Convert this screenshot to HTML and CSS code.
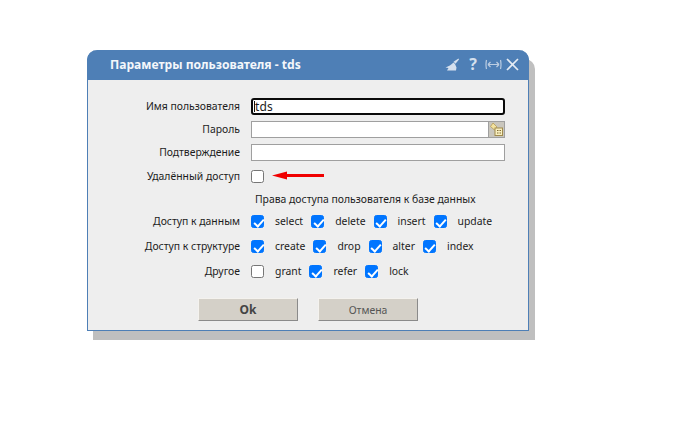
FILE: index.html
```html
<!DOCTYPE html>
<html lang="ru">
<head>
<meta charset="utf-8">
<title>Параметры пользователя</title>
<link rel="stylesheet" href="styles.css">
</head>
<body>
<div class="dialog">
  <header class="titlebar">
    <h1 class="title">Параметры пользователя - tds</h1>
    <div class="tools">
      <svg class="icon icon-broom" width="14" height="13" viewBox="0 0 14 13"><path d="M13.500 .5 8.500 3.800 10.500 5.800 14 1.500ZM8.500 4.500C6.500 6.500 3.500 8.500 .5 9.500L3.500 10 2 12.500H11L11.500 9.500 10 6Z" fill="#d5e0ee"/></svg>
      <span class="help">?</span>
      <svg class="icon icon-fit" width="17" height="11" viewBox="0 0 17 11"><path d="M1.500 1Q.500 5.500 1.500 10M15.500 1Q16.500 5.500 15.500 10M3 5.500H14M3 5.500 5.500 3M3 5.500 5.500 8M14 5.500 11.500 3M14 5.500 11.500 8" stroke="#bccde2" stroke-width="1.200" fill="none"/></svg>
      <svg class="icon" width="13" height="13" viewBox="0 0 13 13"><path d="M1 1 12 12M12 1 1 12" stroke="#e4ebf4" stroke-width="1.700" fill="none"/></svg>
    </div>
  </header>
  <form class="body">
    <div class="row row-field">
      <label class="label">Имя пользователя</label>
      <div class="input input-focus"><span class="caret"></span><span class="value">tds</span></div>
    </div>
    <div class="row row-field">
      <label class="label">Пароль</label>
      <div class="input input-pass">
        <span class="keybtn">
          <svg width="15" height="15" viewBox="0 0 15 15"><path d="M4 1 8 5 5.500 8 1.500 4.500Z" fill="#f3e3a0" stroke="#b59a55" stroke-width=".8"/><rect x="6" y="6" width="7.500" height="7.500" fill="#f8efc0" stroke="#a08a4c"/><path d="M8 8.500H9.500M10.500 8.500H12M8 11H9.500M10.500 11H12" stroke="#806a30"/></svg>
        </span>
      </div>
    </div>
    <div class="row row-field">
      <label class="label">Подтверждение</label>
      <div class="input"></div>
    </div>
    <div class="row row-remote">
      <label class="label">Удалённый доступ</label>
      <input class="check" type="checkbox">
      <svg class="arrow" width="52" height="9" viewBox="0 0 52 9"><path d="M0 4.500 15 .5V3H52V6H15V8.500Z" fill="#f00000"/></svg>
    </div>
    <div class="row row-heading">
      <span class="label"></span>
      <span class="heading">Права доступа пользователя к базе данных</span>
    </div>
    <div class="row row-perm">
      <label class="label">Доступ к данным</label>
      <div class="perms">
        <label class="perm"><input class="check" type="checkbox" checked><span class="perm-text">select</span></label>
        <label class="perm"><input class="check" type="checkbox" checked><span class="perm-text">delete</span></label>
        <label class="perm"><input class="check" type="checkbox" checked><span class="perm-text">insert</span></label>
        <label class="perm"><input class="check" type="checkbox" checked><span class="perm-text">update</span></label>
      </div>
    </div>
    <div class="row row-perm">
      <label class="label">Доступ к структуре</label>
      <div class="perms">
        <label class="perm"><input class="check" type="checkbox" checked><span class="perm-text">create</span></label>
        <label class="perm"><input class="check" type="checkbox" checked><span class="perm-text">drop</span></label>
        <label class="perm"><input class="check" type="checkbox" checked><span class="perm-text">alter</span></label>
        <label class="perm"><input class="check" type="checkbox" checked><span class="perm-text">index</span></label>
      </div>
    </div>
    <div class="row row-perm">
      <label class="label">Другое</label>
      <div class="perms">
        <label class="perm"><input class="check" type="checkbox"><span class="perm-text">grant</span></label>
        <label class="perm"><input class="check" type="checkbox" checked><span class="perm-text">refer</span></label>
        <label class="perm"><input class="check" type="checkbox" checked><span class="perm-text">lock</span></label>
      </div>
    </div>
    <div class="buttons">
      <button class="btn btn-ok" type="button">Ok</button>
      <button class="btn btn-cancel" type="button">Отмена</button>
    </div>
  </form>
</div>
</body>
</html>
```

FILE: styles.css
```css
* { box-sizing: border-box; }
html, body { margin: 0; height: 100%; background: #fff; }
body {
  padding: 50px 0 0 87px;
  font-family: "Noto Sans", "DejaVu Sans", sans-serif;
  font-size: 10.4px;
  color: #1c1c1c;
}
.dialog {
  width: 442px;
  height: 281px;
  background: #eeeeee;
  border: 1px solid #4e7fb6;
  border-top: 0;
  border-radius: 10px 10px 0 0;
  box-shadow: 6px 9px 0 #bfbfbf;
  display: flex;
  flex-direction: column;
}
.titlebar {
  height: 30px;
  margin: 0 -1px;
  flex: none;
  background: #4e7fb6;
  border-radius: 10px 10px 0 0;
  display: flex;
  align-items: center;
  padding: 0 10px 0 23px;
  color: #fff;
}
.title { margin: 0; font-size: 12.100px; font-weight: bold; flex: 1; color: #f4f7fb; padding-bottom: 1px; }
.tools { display: flex; align-items: center; margin-top: -2px; }
.icon { display: block; }
.icon-broom { margin-right: 10px; }
.help { font-size: 16px; font-weight: bold; color: #d5e0ee; line-height: 14px; width: 8px; text-align: center; margin-right: 8px; }
.icon-fit { margin-right: 4px; }
.body { padding-top: 18px; display: flex; flex-direction: column; }
.row { display: flex; align-items: center; }
.label { width: 152px; margin-right: 11px; padding-bottom: 1px; text-align: right; flex: none; }
.row-field { height: 17px; margin-bottom: 6px; }
.input {
  width: 254px;
  height: 17px;
  background: #fff;
  border: 1px solid #9f9f9f;
  position: relative;
  display: flex;
  align-items: center;
}
.input-focus {
  border: 2px solid #0a0a0a;
  border-radius: 3px;
  padding-left: 1px;
  font-size: 12px;
}
.caret { width: 1px; height: 11px; background: #111; flex: none; }
.value { letter-spacing: .2px; }
.input-pass { justify-content: flex-end; }
.keybtn {
  width: 16px;
  height: 15px;
  background: #c9c6bd;
  border-left: 1px solid #9f9f9f;
  display: flex;
  align-items: center;
  justify-content: center;
}
.row-remote { height: 13px; margin-top: 3px; }
.arrow { margin: -2px 0 0 8px; }
.row-heading { height: 13px; margin-top: 10px; }
.heading { margin-left: 4px; padding-bottom: 1px; }
.row-perm { height: 13px; margin-top: 12px; }
.row-heading + .row-perm { margin-top: 9px; }
.perms { display: flex; gap: 8px; }
.perm { display: flex; align-items: center; gap: 11px; }
.perm-text { padding-bottom: 1px; }
.check {
  appearance: none;
  -webkit-appearance: none;
  margin: 0;
  width: 13px;
  height: 13px;
  flex: none;
  background: #fff;
  border: 1px solid #767676;
  border-radius: 2.5px;
  position: relative;
}
.check:checked { background: #0075ff; border-color: #0075ff; }
.check:checked::after {
  content: "";
  position: absolute;
  left: 3.500px;
  top: .500px;
  width: 4px;
  height: 8px;
  border: solid #fff;
  border-width: 0 2px 2px 0;
  transform: rotate(42deg);
}
.buttons { display: flex; gap: 20px; margin-top: 20px; padding-left: 110px; }
.btn {
  width: 100px;
  height: 23px;
  padding: 0;
  font-family: inherit;
  font-size: 10.400px;
  color: #555;
  background: #d4d0c8;
  border: 1px solid;
  border-color: #f4f2ee #8a8a8a #8a8a8a #f4f2ee;
}
.btn-ok { font-weight: bold; font-size: 12px; color: #444; }
```
